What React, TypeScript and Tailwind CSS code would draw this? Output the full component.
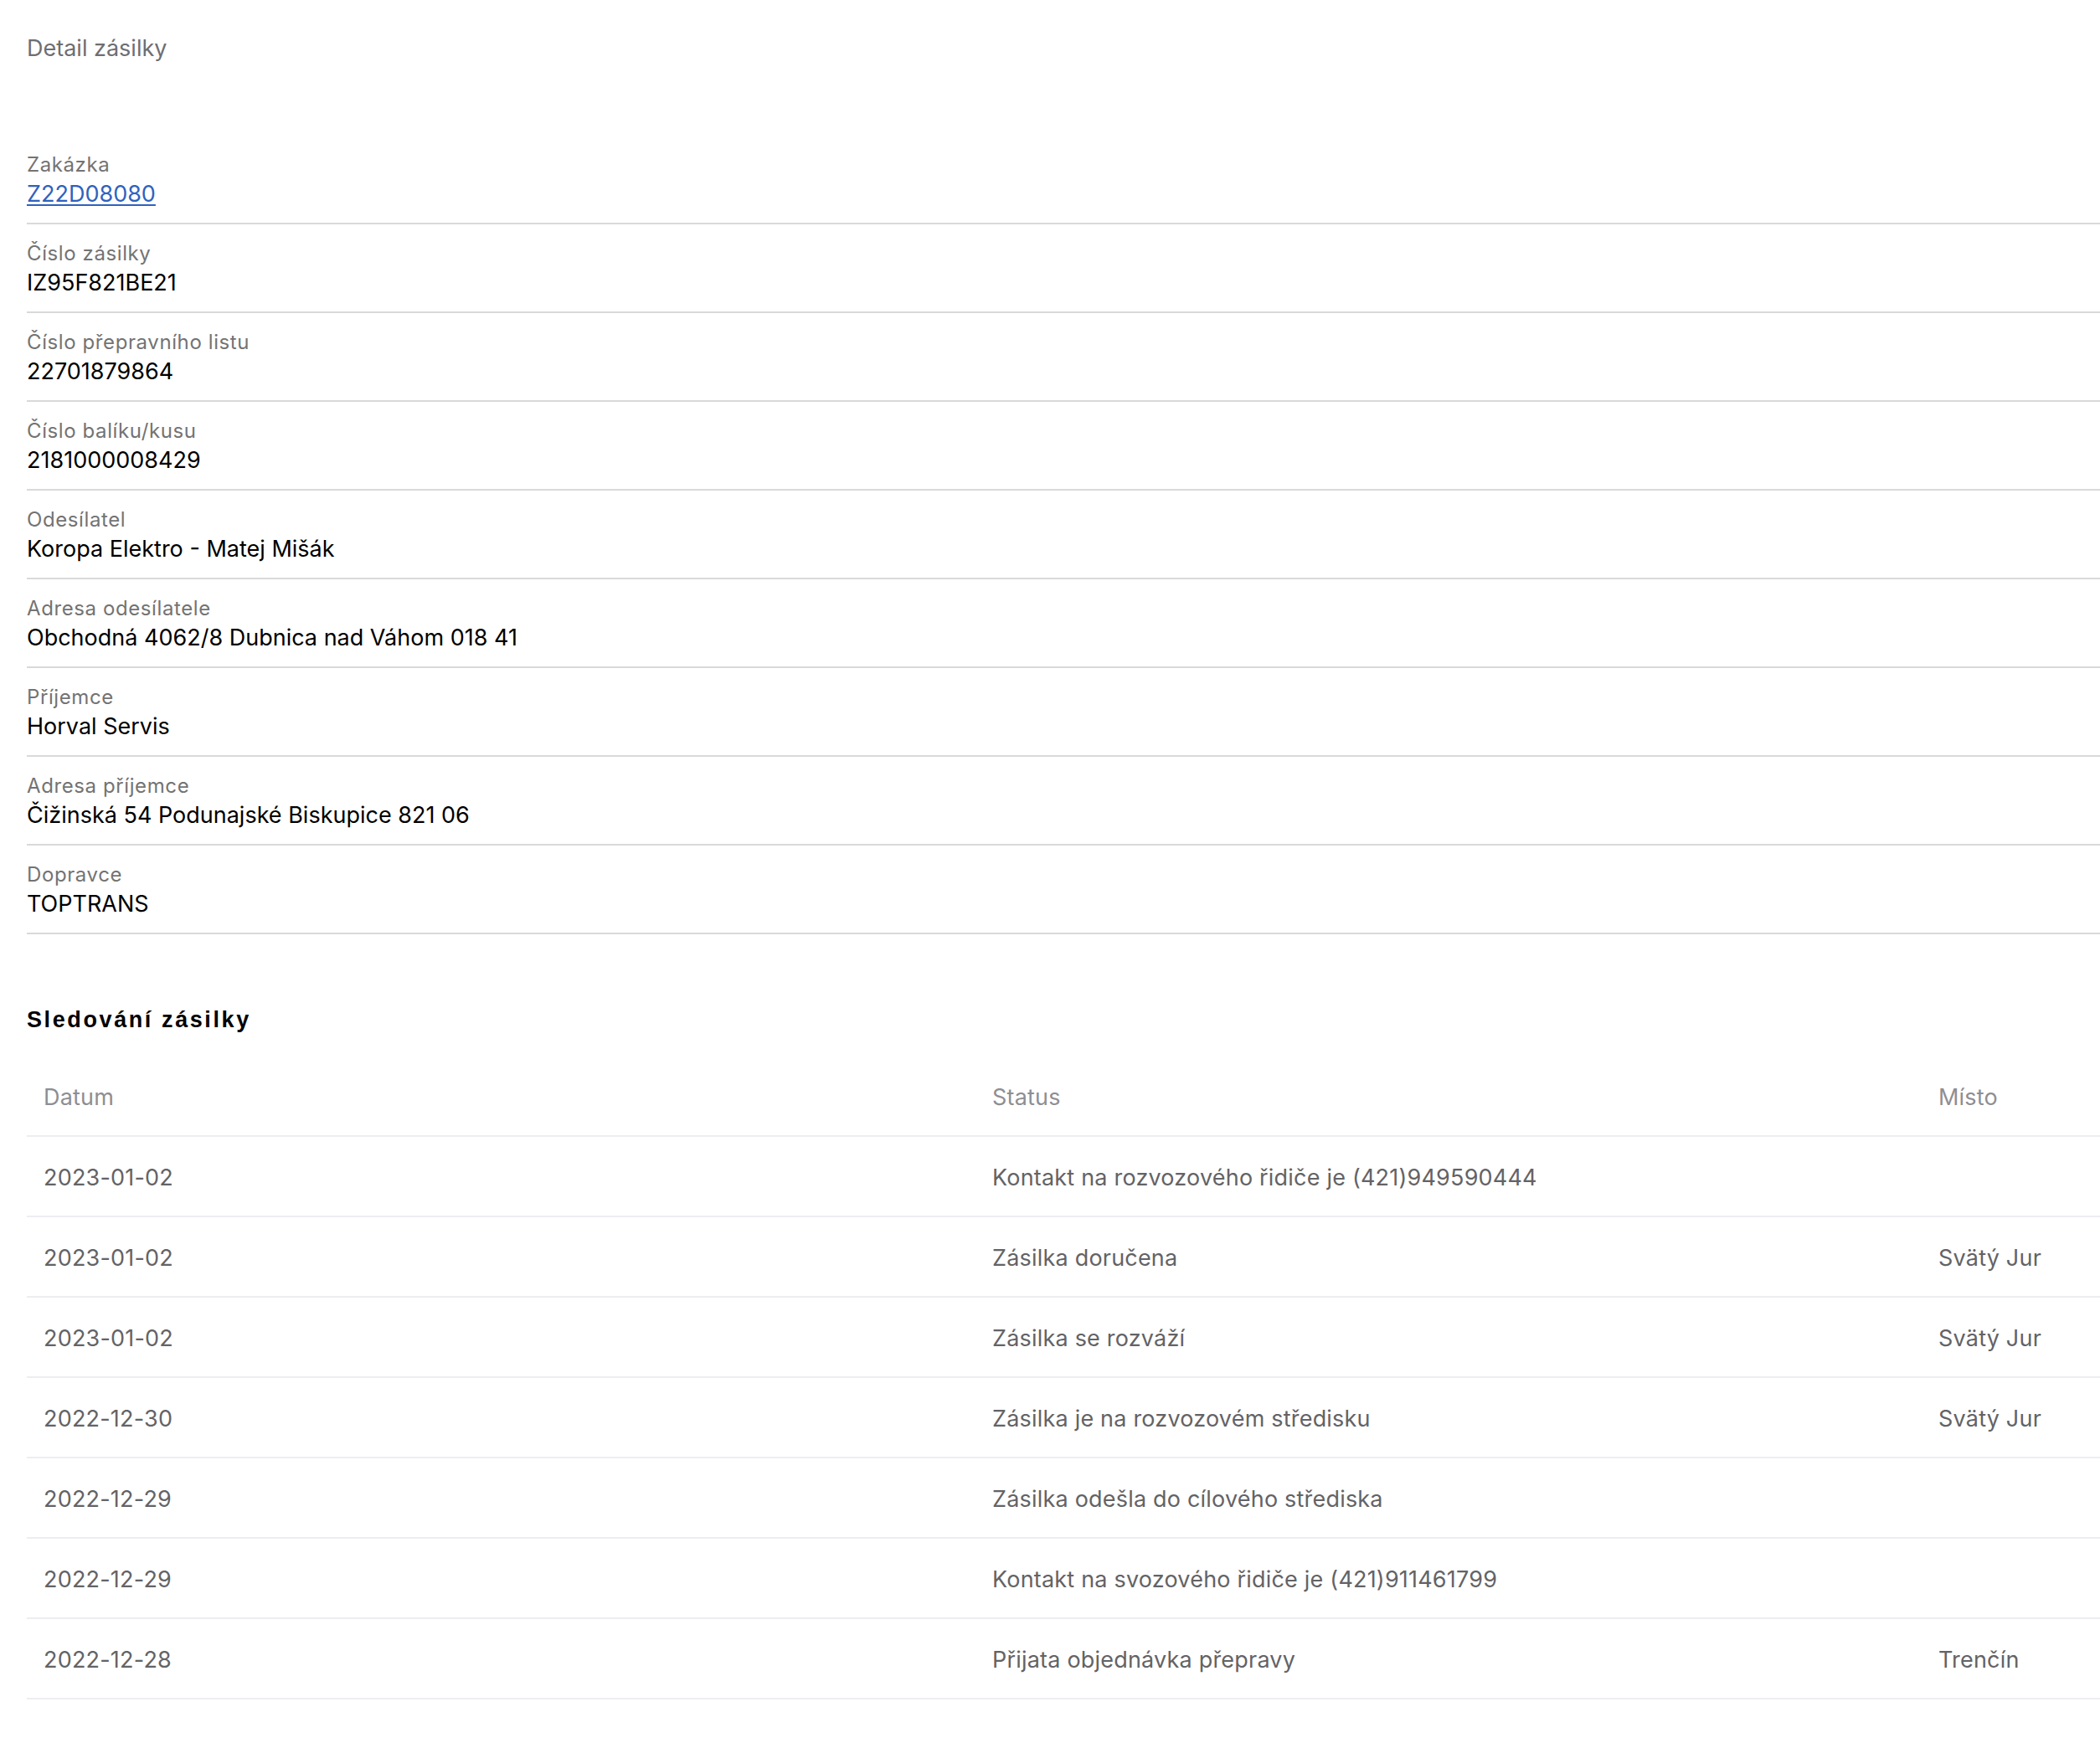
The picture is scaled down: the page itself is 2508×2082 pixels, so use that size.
import React from "react";

type Field = { label: string; value: string; href?: string };

const fields: Field[] = [
  { label: "Zakázka", value: "Z22D08080", href: "#" },
  { label: "Číslo zásilky", value: "IZ95F821BE21" },
  { label: "Číslo přepravního listu", value: "22701879864" },
  { label: "Číslo balíku/kusu", value: "2181000008429" },
  { label: "Odesílatel", value: "Koropa Elektro - Matej Mišák" },
  { label: "Adresa odesílatele", value: "Obchodná 4062/8 Dubnica nad Váhom 018 41" },
  { label: "Příjemce", value: "Horval Servis" },
  { label: "Adresa příjemce", value: "Čižinská 54 Podunajské Biskupice 821 06" },
  { label: "Dopravce", value: "TOPTRANS" },
];

type Event = { date: string; status: string; place: string };

const events: Event[] = [
  { date: "2023-01-02", status: "Kontakt na rozvozového řidiče je (421)949590444", place: "" },
  { date: "2023-01-02", status: "Zásilka doručena", place: "Svätý Jur" },
  { date: "2023-01-02", status: "Zásilka se rozváží", place: "Svätý Jur" },
  { date: "2022-12-30", status: "Zásilka je na rozvozovém středisku", place: "Svätý Jur" },
  { date: "2022-12-29", status: "Zásilka odešla do cílového střediska", place: "" },
  { date: "2022-12-29", status: "Kontakt na svozového řidiče je (421)911461799", place: "" },
  { date: "2022-12-28", status: "Přijata objednávka přepravy", place: "Trenčín" },
];

function FieldRow({ field }: { field: Field }) {
  return (
    <div className="border-b-2 border-[#d9d9d9] pt-[18px] pb-[16px]">
      <div className="text-[24px] leading-[34px] tracking-[0.6px] text-[#737373]">{field.label}</div>
      <div className="text-[27px] leading-[36px] text-black">
        {field.href ? (
          <a href={field.href} className="text-[#2f62be] underline underline-offset-[3px]">
            {field.value}
          </a>
        ) : (
          field.value
        )}
      </div>
    </div>
  );
}

export default function App() {
  return (
    <main className="min-h-screen bg-white pl-[32px] pt-[38px] pb-[40px] font-['Inter',sans-serif]">
      {/* Page title */}
      <h1 className="text-[27px] leading-[40px] text-[#6e6e73]">Detail zásilky</h1>

      {/* Shipment details */}
      <section className="mt-[84px]">
        {fields.map((f) => (
          <FieldRow key={f.label} field={f} />
        ))}
      </section>

      {/* Tracking */}
      <section className="mt-[86px]">
        <h2 className="font-['Liberation_Sans',Arial,sans-serif] text-[27px] leading-[32px] font-bold tracking-[2.6px] text-black">
          Sledování zásilky
        </h2>

        <div className="mt-[28px] text-[27px] tracking-[0.2px]">
          <div className="grid h-[96px] grid-cols-[1133px_1130px_1fr] items-center border-b-2 border-[#ededf2] pt-[4px] text-[#8e8e93]">
            <div className="pl-[20px]">Datum</div>
            <div className="pl-[20px]">Status</div>
            <div className="pl-[20px]">Místo</div>
          </div>
          {events.map((e, i) => (
            <div
              key={i}
              className="grid h-[96px] grid-cols-[1133px_1130px_1fr] items-center border-b-2 border-[#ededf2] pt-[4px] text-[#636366]"
            >
              <div className="pl-[20px]">{e.date}</div>
              <div className="pl-[20px]">{e.status}</div>
              <div className="pl-[20px]">{e.place}</div>
            </div>
          ))}
        </div>
      </section>
    </main>
  );
}
